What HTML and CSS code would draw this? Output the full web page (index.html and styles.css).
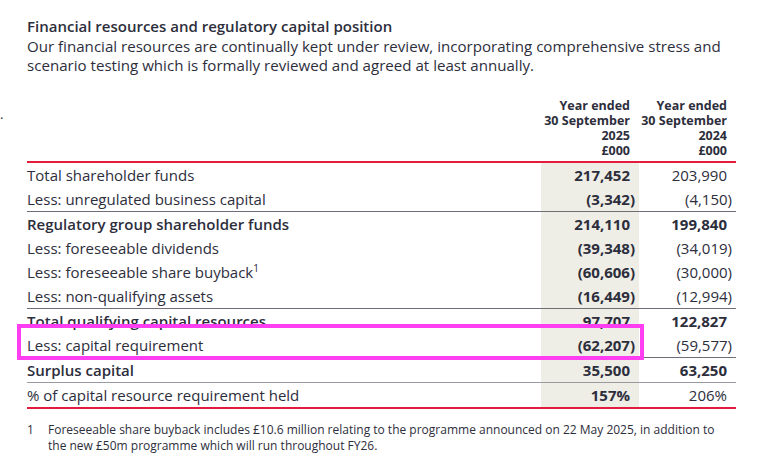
FILE: index.html
```html
<!DOCTYPE html>
<html lang="en">
<head>
<meta charset="utf-8">
<title>Financial resources and regulatory capital position</title>
<link rel="stylesheet" href="styles.css">
</head>
<body>
<div class="page">
  <span class="stray">.</span>
  <h2 class="title">Financial resources and regulatory capital position</h2>
  <p class="intro">Our financial resources are continually kept under review, incorporating comprehensive stress and scenario testing which is formally reviewed and agreed at least annually.</p>
  <div class="table-wrap">
    <table class="fin">
      <thead>
        <tr>
          <th class="label"></th>
          <th class="num">Year ended<br>30 September<br>2025<br>£000</th>
          <th class="num">Year ended<br>30 September<br>2024<br>£000</th>
        </tr>
      </thead>
      <tbody>
        <tr><td class="label">Total shareholder funds</td><td class="num cur">217,452</td><td class="num">203,990</td></tr>
        <tr class="rule"><td class="label">Less: unregulated business capital</td><td class="num cur neg">(3,342)</td><td class="num neg">(4,150)</td></tr>
        <tr class="strong"><td class="label">Regulatory group shareholder funds</td><td class="num cur">214,110</td><td class="num">199,840</td></tr>
        <tr><td class="label">Less: foreseeable dividends</td><td class="num cur neg">(39,348)</td><td class="num neg">(34,019)</td></tr>
        <tr><td class="label">Less: foreseeable share buyback<sup>1</sup></td><td class="num cur neg">(60,606)</td><td class="num neg">(30,000)</td></tr>
        <tr class="rule"><td class="label">Less: non-qualifying assets</td><td class="num cur neg">(16,449)</td><td class="num neg">(12,994)</td></tr>
        <tr class="strong"><td class="label">Total qualifying capital resources</td><td class="num cur">97,707</td><td class="num">122,827</td></tr>
        <tr class="rule"><td class="label">Less: capital requirement</td><td class="num cur neg">(62,207)</td><td class="num neg">(59,577)</td></tr>
        <tr class="strong rule light"><td class="label">Surplus capital</td><td class="num cur">35,500</td><td class="num">63,250</td></tr>
        <tr class="last"><td class="label">% of capital resource requirement held</td><td class="num cur">157%</td><td class="num">206%</td></tr>
      </tbody>
    </table>
    <div class="highlight"></div>
  </div>
  <div class="footnote"><span class="fn-num">1</span><span class="fn-text">Foreseeable share buyback includes £10.6 million relating to the programme announced on 22 May 2025, in addition to the new £50m programme which will run throughout FY26.</span></div>
</div>
</body>
</html>
```
FILE: styles.css
```css
html, body {
  margin: 0;
  padding: 0;
  background: #ffffff;
}
body {
  font-family: "Open Sans", "Liberation Sans", sans-serif;
  color: #2d2e3c;
}
.page {
  position: relative;
  width: 773px;
  height: 456px;
  padding: 17px 0 0 27px;
  box-sizing: border-box;
  overflow: hidden;
}
.stray {
  position: absolute;
  left: 0;
  top: 106px;
  font-size: 13px;
  line-height: 16px;
}
.title {
  margin: 0;
  font-size: 15px;
  font-weight: 600;
  line-height: 19px;
}
.intro {
  margin: 1px 0 0;
  width: 712px;
  font-size: 15.1px;
  line-height: 19px;
}
.table-wrap {
  position: relative;
  width: 709px;
  margin-top: 23px;
}
.fin {
  width: 709px;
  border-collapse: collapse;
  font-size: 15px;
}
.fin th {
  font-size: 12.5px;
  font-weight: 700;
  line-height: 15px;
  text-align: right;
  padding: 0 9px 3px 0;
  vertical-align: bottom;
}
.fin td {
  height: 24px;
  padding: 0;
  line-height: 24px;
}
.fin td.label { text-align: left; }
.fin .num { width: 97px; text-align: right; padding-right: 9px; box-sizing: border-box; white-space: nowrap; }
.fin td.num { padding-right: 9px; }
.fin td.neg { padding-right: 4px; }
.fin td.cur { background: #eeede6; font-weight: 700; width: 98px; }
.fin tbody { border-top: 2px solid #e41b3d; }
.fin tr.rule td { border-bottom: 1px solid #6e6d78; }
.fin tr.rule.light td { border-bottom-color: #9a99a2; }
.fin tr.last td { border-bottom: 2px solid #e41b3d; }
.fin tr.strong td.label { font-weight: 600; }
.fin tr.strong td.num { font-weight: 700; }
.fin sup {
  font-size: 10px;
  line-height: 0;
  vertical-align: 6px;
}
.highlight {
  position: absolute;
  left: -10px;
  top: 226px;
  width: 627px;
  height: 36px;
  border: 4px solid #ff3ef2;
  box-sizing: border-box;
}
.footnote {
  display: flex;
  margin-top: 13px;
  width: 700px;
  font-size: 12px;
  line-height: 16px;
}
.fn-num { width: 21px; flex: none; }
.fn-text { flex: 1; }
```
